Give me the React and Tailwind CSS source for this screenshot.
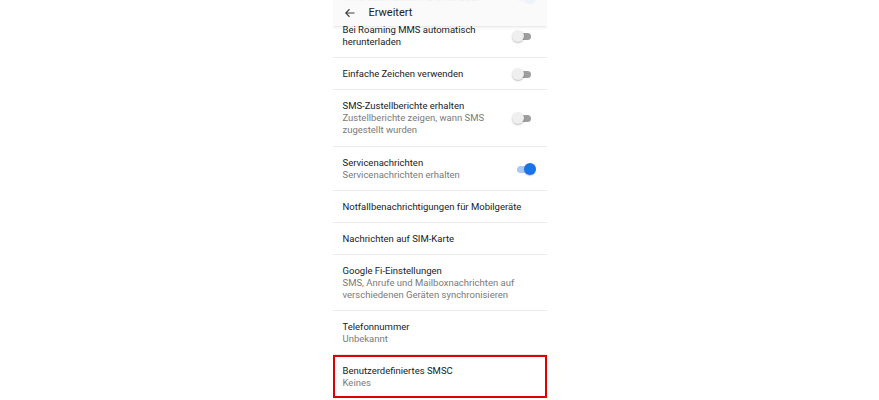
import React from "react";

const rows = [
  { title: "MMS automatisch herunterladen", toggle: "on" },
  { title: "Bei Roaming MMS automatisch herunterladen", toggle: "off" },
  { title: "Einfache Zeichen verwenden", toggle: "off" },
  {
    title: "SMS-Zustellberichte erhalten",
    sub: "Zustellberichte zeigen, wann SMS zugestellt wurden",
    toggle: "off",
    tall: true,
  },
  { title: "Servicenachrichten", sub: "Servicenachrichten erhalten", toggle: "on" },
  { title: "Notfallbenachrichtigungen für Mobilgeräte" },
  { title: "Nachrichten auf SIM-Karte" },
  {
    title: "Google Fi-Einstellungen",
    sub: "SMS, Anrufe und Mailboxnachrichten auf verschiedenen Geräten synchronisieren",
  },
  { title: "Telefonnummer", sub: "Unbekannt" },
  { title: "Benutzerdefiniertes SMSC", sub: "Keines", marked: true },
];

function Toggle({ on }) {
  if (on) {
    return (
      <div className="relative w-[24px] h-[12px] shrink-0">
        <div className="absolute left-[5px] right-[4px] top-[2.5px] h-[7px] rounded-full bg-[#a9c8f5]" />
        <div className="absolute right-0 top-0 w-[12px] h-[12px] rounded-full bg-[#1a73e8] shadow-[0_1px_1px_rgba(0,0,0,0.2)]" />
      </div>
    );
  }
  return (
    <div className="relative w-[24px] h-[12px] shrink-0">
      <div className="absolute left-[3px] right-[5px] top-[2.5px] h-[7px] rounded-full bg-[#9e9e9e]" />
      <div className="absolute left-0 top-0 w-[12px] h-[12px] rounded-full bg-[#efefef] shadow-[0_1px_1.5px_rgba(0,0,0,0.25)]" />
    </div>
  );
}

function Row({ row }) {
  return (
    <div
      className={
        "flex items-center pr-[11px] " +
        (row.marked
          ? "border-2 border-[#e00000] pl-[8px] pt-[8px] pb-[7px]"
          : "border-b border-[#ebebeb] pl-[10px] pt-[10px] " +
            (row.tall ? "pb-[10px]" : "pb-[9px]"))
      }
    >
      <div className={"flex-1 min-w-0 " + (row.toggle ? "pr-[10px]" : "pr-0")}>
        <div className="text-[9.5px] leading-[12px] text-[#202124]">{row.title}</div>
        {row.sub && (
          <div className="text-[9.5px] leading-[12px] text-[#7a7a7a]">{row.sub}</div>
        )}
      </div>
      {row.toggle && <Toggle on={row.toggle === "on"} />}
    </div>
  );
}

export default function App() {
  return (
    <div
      className="w-[879px] h-[400px] bg-white flex justify-center overflow-hidden"
      style={{ fontFamily: "Roboto, 'Noto Sans', sans-serif" }}
    >
      <div className="relative w-[214px] h-[400px] overflow-hidden bg-white">
        <div className="mt-[-18px]">
          {rows.map((r) => (
            <Row key={r.title} row={r} />
          ))}
        </div>
        <div className="absolute left-0 right-0 top-0 h-[26px] bg-[#fafafa]/95 shadow-[0_1px_3px_rgba(0,0,0,0.12)] flex items-center">
          <svg
            className="ml-[11px]"
            width="12"
            height="12"
            viewBox="0 0 24 24"
            fill="none"
            stroke="#3c4043"
            strokeWidth="2.2"
          >
            <path d="M21 12H3.5M11 4.5 3.5 12l7.5 7.5" />
          </svg>
          <span className="ml-[13px] text-[11px] text-[#202124]">Erweitert</span>
        </div>
      </div>
    </div>
  );
}
